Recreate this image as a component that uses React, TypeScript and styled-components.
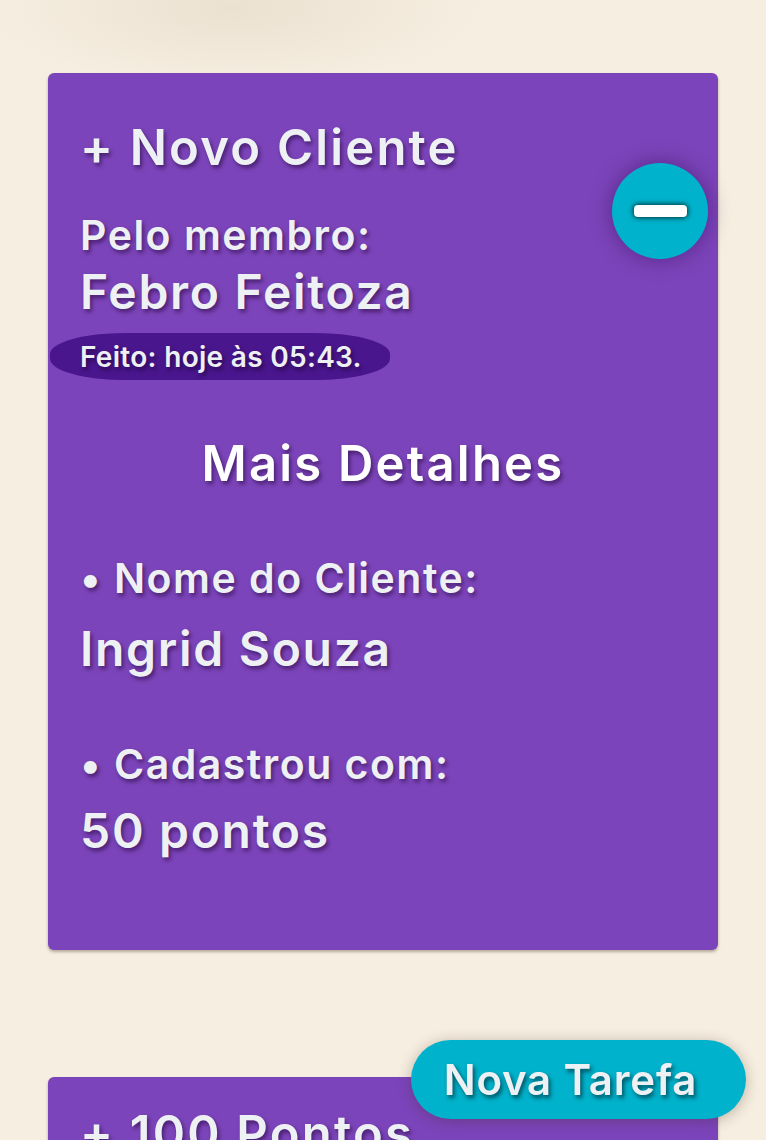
import React from 'react';
import styled, { createGlobalStyle } from 'styled-components';

const GlobalStyle = createGlobalStyle`
  html, body {
    margin: 0;
    padding: 0;
  }
  body {
    background-color: #f6eee1;
    background-image: radial-gradient(ellipse 250px 80px at 235px 8px, rgba(150, 120, 80, 0.11), rgba(150, 120, 80, 0) 100%);
    background-repeat: no-repeat;
    font-family: Inter, "Noto Sans", sans-serif;
    color: #eef1f4;
  }
`;

const Page = styled.main`
  display: flex;
  flex-direction: column;
  gap: 127px;
  padding: 73px 48px 0 48px;
`;

const Card = styled.section<{ $padTop: number; $padBottom: number }>`
  position: relative;
  display: flex;
  flex-direction: column;
  background: #7c44ba;
  border-radius: 6px;
  box-shadow: 0 2px 3px rgba(60, 40, 20, 0.35);
  padding: ${(p) => p.$padTop}px 32px ${(p) => p.$padBottom}px 32px;
  box-sizing: border-box;
`;

const shadow = 'text-shadow: 2px 3px 4px rgba(30, 0, 50, 0.55);';

const Title = styled.h2<{ $top?: number; $center?: boolean }>`
  margin: ${(p) => p.$top ?? 0}px 0 0 0;
  font-size: 49px;
  font-weight: 600;
  line-height: 1.2;
  letter-spacing: 2.2px;
  text-align: ${(p) => (p.$center ? 'center' : 'left')};
  color: ${(p) => (p.$center ? '#ffffff' : '#eef1f4')};
  white-space: nowrap;
  ${shadow}
`;

const Label = styled.div<{ $top: number }>`
  margin-top: ${(p) => p.$top}px;
  font-size: 41px;
  font-weight: 600;
  line-height: 1.2;
  letter-spacing: 1.5px;
  white-space: nowrap;
  ${shadow}
`;

const Value = styled.div<{ $top: number }>`
  margin-top: ${(p) => p.$top}px;
  font-size: 48px;
  font-weight: 600;
  line-height: 1.2;
  letter-spacing: 1.7px;
  white-space: nowrap;
  ${shadow}
`;

const Stamp = styled.div`
  align-self: flex-start;
  margin: 12px 0 0 -30px;
  padding: 7px 30px 6px 30px;
  width: 280px;
  background: #4a168e;
  border-radius: 22% / 45%;
  font-size: 28px;
  font-weight: 600;
  line-height: 34px;
  letter-spacing: 0.3px;
  white-space: nowrap;
  text-shadow: 2px 3px 4px rgba(20, 0, 40, 0.6);
`;

const MinusButton = styled.button`
  position: absolute;
  top: 90px;
  right: 10px;
  width: 96px;
  height: 96px;
  border: none;
  border-radius: 50%;
  background: #00b2cb;
  box-shadow: 0 0 22px rgba(40, 0, 70, 0.45);
  display: flex;
  align-items: center;
  justify-content: center;
  cursor: pointer;
  padding: 0;
`;

const MinusBar = styled.span`
  display: block;
  width: 53px;
  height: 12px;
  border-radius: 4px;
  background: #ffffff;
  box-shadow: 0 0 5px 1px #00353d;
`;

const NewTaskButton = styled.button`
  position: fixed;
  right: 20px;
  bottom: 21px;
  width: 335px;
  height: 79px;
  border: none;
  border-radius: 40px;
  background: #00b2cb;
  box-shadow: 0 2px 14px rgba(60, 40, 20, 0.3);
  font-family: Inter, "Noto Sans", sans-serif;
  font-size: 42px;
  font-weight: 600;
  letter-spacing: 0.8px;
  color: #eef1f4;
  text-shadow: 2px 3px 4px rgba(0, 40, 50, 0.7);
  padding: 0 16px 0 0;
  cursor: pointer;
`;

const App = () => {
  return (
    <>
      <GlobalStyle />
      <Page>
        <Card $padTop={46} $padBottom={90}>
          <Title>+ Novo Cliente</Title>
          <MinusButton aria-label="Recolher">
            <MinusBar />
          </MinusButton>
          <Label $top={33}>Pelo membro:</Label>
          <Value $top={3}>Febro Feitoza</Value>
          <Stamp>Feito: hoje às 05:43.</Stamp>
          <Title $top={55} $center>Mais Detalhes</Title>
          <Label $top={61}>• Nome do Cliente:</Label>
          <Value $top={16}>Ingrid Souza</Value>
          <Label $top={63}>• Cadastrou com:</Label>
          <Value $top={13}>50 pontos</Value>
        </Card>
        <Card $padTop={28} $padBottom={300}>
          <Title>+ 100 Pontos</Title>
        </Card>
      </Page>
      <NewTaskButton>Nova Tarefa</NewTaskButton>
    </>
  );
};

export default App;
